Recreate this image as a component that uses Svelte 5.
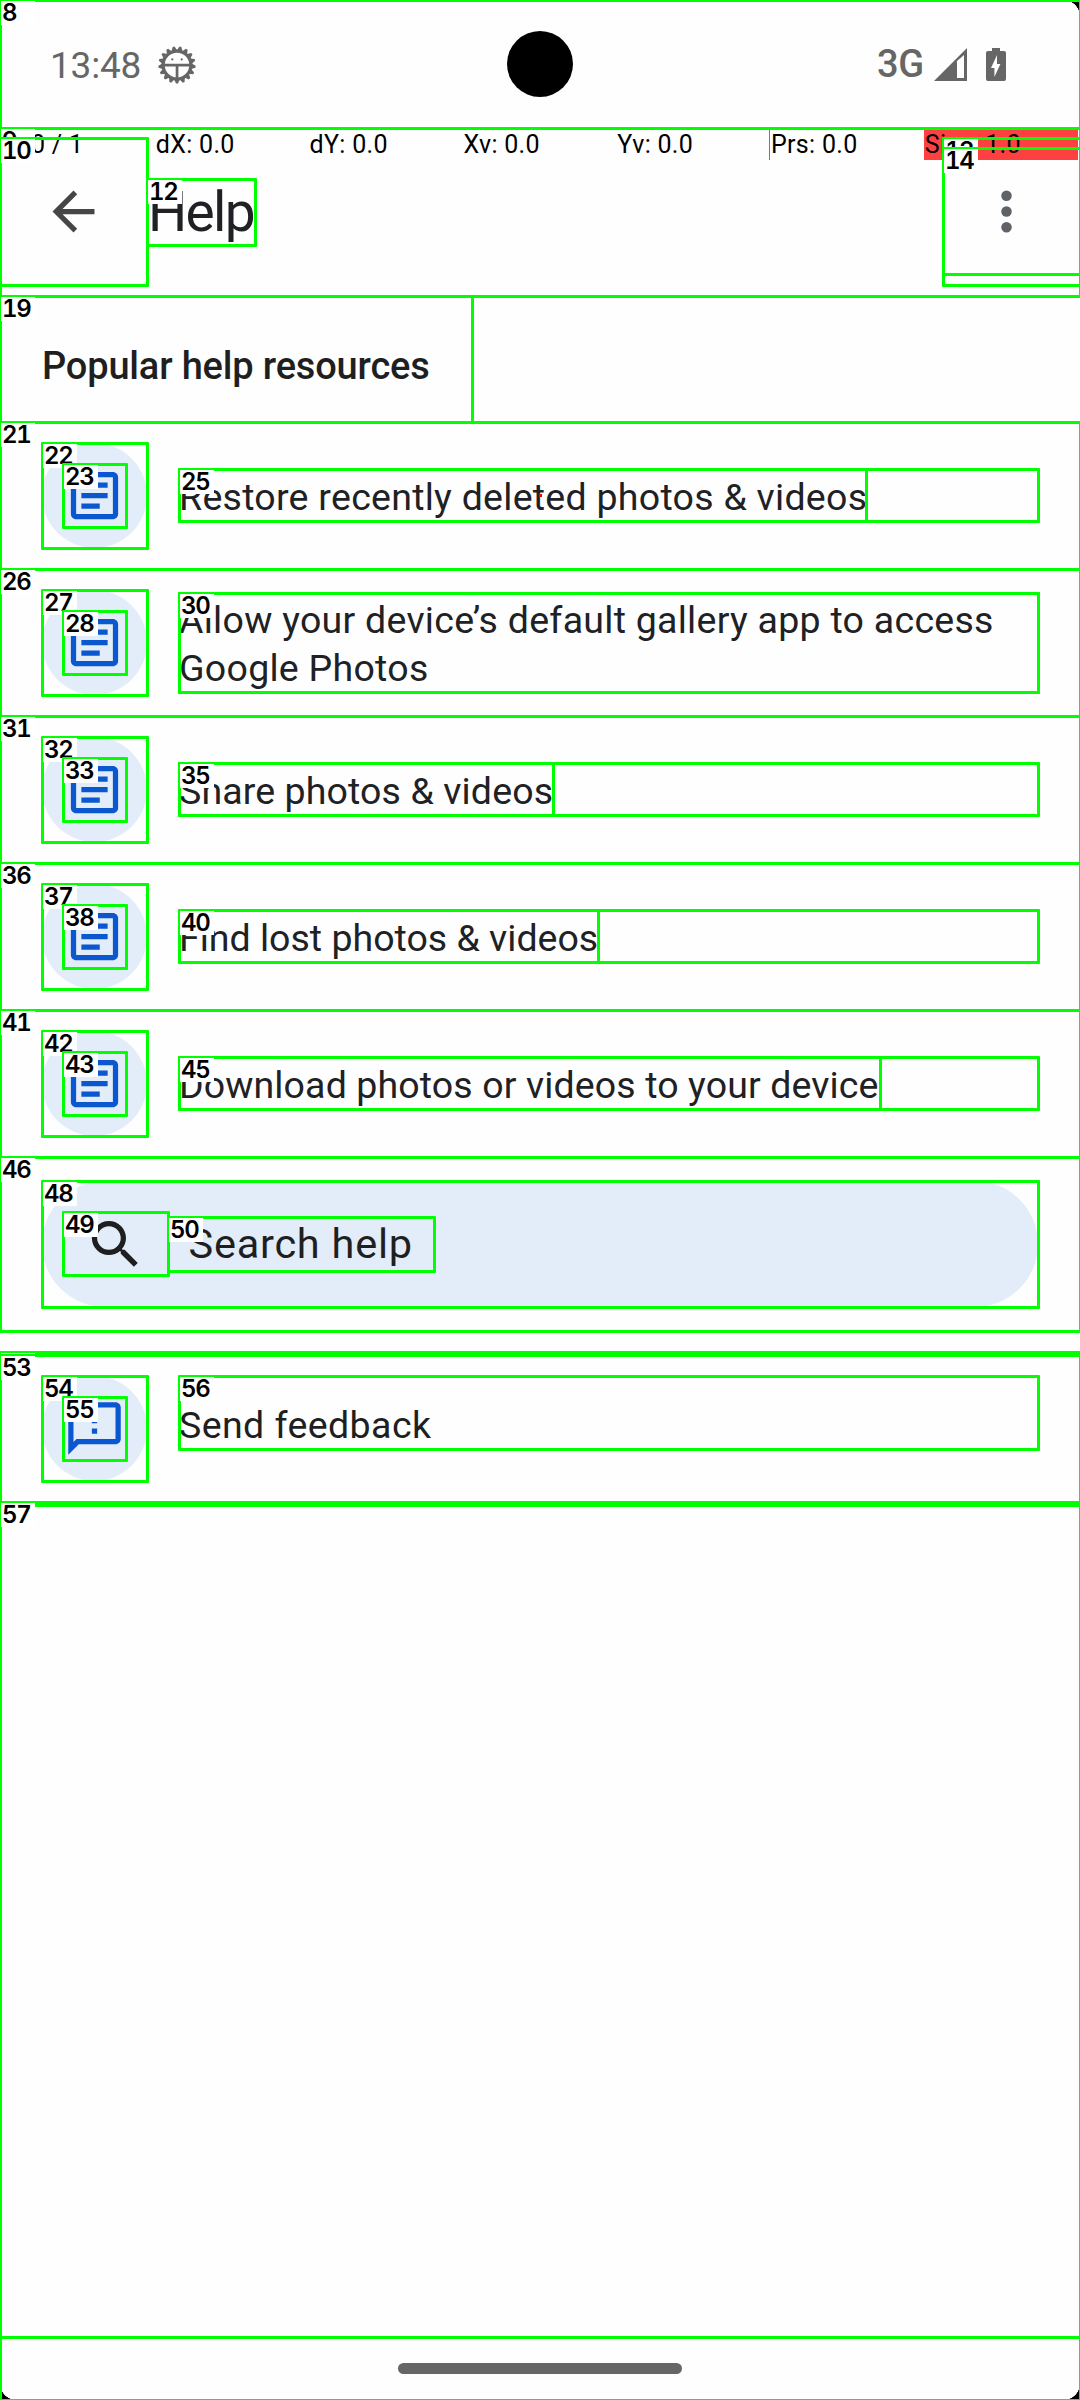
<script>
  const articles = [
    { text: 'Restore recently deleted photos & videos', fit: 'wide' },
    { text: 'Allow your device’s default gallery app to access Google Photos', fit: 'wide' },
    { text: 'Share photos & videos', fit: 'slight' },
    { text: 'Find lost photos & videos', fit: 'plain' },
    { text: 'Download photos or videos to your device', fit: 'slight' }
  ];

  const pointer = ['P: 0 / 1', 'dX: 0.0', 'dY: 0.0', 'Xv: 0.0', 'Yv: 0.0', 'Prs: 0.0', 'Size: 1.0'];

  // Inspector boxes: [label, left, top, right, bottom]
  const rows = [422, 569, 716, 863, 1010].flatMap((y, i) => {
    const n = 21 + i * 5;
    const tall = i === 1;
    const right = [866, 1038, 553, 598, 880][i];
    const t = tall ? 593 : y + 47;
    const b = tall ? 692 : y + 99;
    return [
      [n, 0, y, 1080, y + 147],
      [n + 1, 42, y + 21, 147, y + 126],
      [n + 2, 63, y + 42, 126, y + 105],
      ['', 179, t, 1038, b],
      [n + 4, 179, t, right, b]
    ];
  });
  const boxes = [
    [8, 0, 0, 1080, 128],
    [9, 0, 128, 1080, 296],
    [10, 0, 138, 147, 285],
    [12, 147, 179, 255, 245],
    [13, 943, 138, 1080, 285],
    [14, 943, 148, 1080, 274],
    [19, 0, 296, 472, 422],
    ...rows,
    [46, 0, 1157, 1080, 1331],
    [48, 42, 1181, 1038, 1307],
    [49, 63, 1212, 168, 1275],
    [50, 168, 1217, 434, 1271],
    [' ', 0, 1352, 1080, 1505],
    [53, 0, 1355, 1080, 1505],
    [54, 42, 1376, 147, 1481],
    [55, 63, 1397, 126, 1460],
    [56, 179, 1376, 1038, 1449],
    [57, 0, 1502, 1080, 2337],
    ['', 0, 2337, 1080, 2400]
  ];

  const teeth = Array.from({ length: 17 }, (_, i) => (i * 360) / 17 + 180);
</script>

<div class="screen">
  <header class="status">
    <span class="time">13:48</span>
    <svg class="bug" viewBox="0 0 40 40">
      {#each teeth as a}
        <path d="M16.6 7 L19 1.4 h2 L23.4 7z" transform="rotate({a} 20 20)" />
      {/each}
      <circle cx="20" cy="20" r="13.9" fill="none" stroke="#666" stroke-width="3.2" />
      <path d="M7 18.7h26v2.7H7z M18.7 20h2.7v13h-2.7z" />
      <circle cx="15.3" cy="14.4" r="1.1" /><circle cx="24.7" cy="14.4" r="1.1" />
    </svg>
    <span class="net">3G</span>
    <svg class="signal" viewBox="0 0 33 33"><path fill-rule="evenodd" d="M0 33L33 0V33z M23 13L30 7V30H23z" /></svg>
    <svg class="battery" viewBox="0 0 20 33"><path fill-rule="evenodd" d="M6 0h8v3h4a2 2 0 0 1 2 2V31a2 2 0 0 1-2 2H2a2 2 0 0 1-2-2V5a2 2 0 0 1 2-2h4z M11 7L5 20H8.4V29L14.4 16H11z" /></svg>
    <div class="camera"></div>
  </header>

  <div class="appbar">
    <svg class="back" viewBox="0 0 24 24"><path d="M20 11H7.83l5.59-5.59L12 4l-8 8 8 8 1.41-1.41L7.83 13H20z" /></svg>
    <h1>Help</h1>
    <svg class="more" viewBox="0 0 24 24"><circle cx="12" cy="6" r="2" /><circle cx="12" cy="12" r="2" /><circle cx="12" cy="18" r="2" /></svg>
    <div class="pointer">
      {#each pointer as p, i}<span class:edge={i === 5} class:hot={i === 6}>{p}</span>{/each}
    </div>
  </div>

  <h2>Popular help resources</h2>

  {#each articles as item}
    <div class="row">
      <div class="disc">
        <svg viewBox="0 0 24 24"><path d="M19 5v14H5V5h14m0-2H5c-1.1 0-2 .9-2 2v14c0 1.1.9 2 2 2h14c1.1 0 2-.9 2-2V5c0-1.1-.9-2-2-2zM14 17H7v-2h7v2zm3-4H7v-2h10v2zm0-4H7V7h10v2z" /></svg>
      </div>
      <p class:wide={item.fit === 'wide'} class:slight={item.fit === 'slight'}>{item.text}</p>
    </div>
  {/each}

  <div class="searchwrap">
    <div class="search">
      <svg viewBox="0 0 24 24"><path d="M15.5 14h-.79l-.28-.27C15.41 12.59 16 11.11 16 9.5 16 5.91 13.09 3 9.5 3S3 5.91 3 9.5 5.91 16 9.5 16c1.61 0 3.09-.59 4.23-1.57l.27.28v.79l5 4.99L20.49 19l-4.99-5zm-6 0C7.01 14 5 11.99 5 9.5S7.01 5 9.5 5 14 7.01 14 9.5 11.99 14 9.5 14z" /></svg>
      <span>Search help</span>
    </div>
  </div>

  <div class="row feedback">
    <div class="disc">
      <svg viewBox="0 0 24 24"><path d="M20 2H4c-1.1 0-1.99.9-1.99 2L2 22l4-4h14c1.1 0 2-.9 2-2V4c0-1.1-.9-2-2-2zm0 14H5.17l-.59.59-.58.58V4h16v12zm-9-4h2v2h-2zm0-6h2v4h-2z" /></svg>
    </div>
    <p>Send feedback</p>
  </div>

  <div class="rest"></div>
  <footer><div class="pill"></div></footer>

  <div class="overlay">
    <i class="corner tr"></i><i class="corner bl"></i><i class="corner br"></i>
    <i class="touch"></i>
    {#each boxes as [n, l, t, r, b]}
      <div class="box" style="left:{l - 1}px;top:{t - 1}px;width:{r - l + 3}px;height:{b - t + 3}px">
        {#if n}<b>{n}</b>{/if}
      </div>
    {/each}
  </div>
</div>

<style>
  :global(body) { margin: 0; background: #fff; }
  .screen {
    position: relative;
    width: 1080px;
    height: 2400px;
    overflow: hidden;
    display: flex;
    flex-direction: column;
    background: #fefefe;
    color: #1f1f1f;
    font-family: Roboto, sans-serif;
  }
  svg { display: block; flex: none; }
  h1, h2, p { margin: 0; font-weight: 400; }

  .status {
    position: relative;
    height: 128px;
    flex: none;
    display: flex;
    align-items: center;
    padding: 0 74px 0 50px;
    box-sizing: border-box;
    color: #666;
    fill: #666;
  }
  .time { font-size: 37px; line-height: 44px; padding-top: 4px; width: 107px; letter-spacing: -0.2px; white-space: nowrap; }
  .bug { width: 40px; height: 40px; padding-top: 1px; }
  .net { margin-left: auto; font-size: 38px; font-weight: 500; line-height: 44px; width: 57px; letter-spacing: -0.3px; }
  .signal { width: 33px; height: 33px; margin-right: 19px; }
  .battery { width: 20px; height: 33px; }
  .camera {
    position: absolute;
    left: 507px;
    top: 31px;
    width: 66px;
    height: 66px;
    border-radius: 50%;
    background: #000;
  }

  .appbar {
    position: relative;
    height: 168px;
    flex: none;
    display: flex;
    align-items: center;
    padding: 0 42px 1px;
    box-sizing: border-box;
  }
  .appbar svg { width: 63px; height: 63px; }
  .back { fill: #444746; }
  .more { fill: #5f6368; margin-left: auto; }
  h1 { font-size: 55px; line-height: 66px; margin-left: 43px; letter-spacing: -1.7px; color: #202124; }
  .pointer {
    position: absolute;
    left: 1px;
    top: 2px;
    display: grid;
    grid-template-columns: repeat(7, 153.8px);
    font-size: 25px;
    line-height: 30px;
    letter-spacing: 0.3px;
    color: #000;
  }
  .pointer span { height: 30px; white-space: nowrap; padding-left: 1px; box-sizing: border-box; }
  .pointer .edge { box-shadow: -1px 0 #ff4040; }
  .pointer .hot { background: #ff4040; }

  h2 {
    height: 126px;
    flex: none;
    padding: 14px 42px 0;
    box-sizing: border-box;
    font-size: 38px;
    line-height: 112px;
    font-weight: 500;
    letter-spacing: -0.18px;
  }
  .row {
    height: 147px;
    flex: none;
    display: flex;
    align-items: center;
    padding: 0 42px;
    gap: 32px;
    box-sizing: border-box;
  }
  .disc {
    width: 105px;
    height: 105px;
    flex: none;
    border-radius: 50%;
    background: #e3edfa;
    display: grid;
    place-items: center;
  }
  .disc svg { width: 63px; height: 63px; fill: #0b57d0; }
  .row p { font-size: 37.5px; line-height: 47.5px; padding-top: 4px; color: #202124; width: 859px; }
  .row .wide { letter-spacing: 0.27px; }
  .row .slight { letter-spacing: 0.12px; }
  .searchwrap { height: 174px; flex: none; padding: 24px 42px; box-sizing: border-box; margin-bottom: 24px; }
  .search {
    height: 126px;
    border-radius: 63px;
    background: #e3edfa;
    display: flex;
    align-items: center;
    padding-left: 42px;
    gap: 41.5px;
    font-size: 41.5px;
    line-height: 54px;
    letter-spacing: 0.75px;
  }
  .search svg { width: 63px; height: 63px; fill: #1f1f1f; }
  .feedback p { padding: 0 0 6px; color: #1f1f1f; letter-spacing: 0.42px; }
  .rest { flex: 1; }
  footer { height: 63px; flex: none; display: grid; place-items: center; }
  .pill { width: 284px; height: 11px; border-radius: 6px; background: #666; }

  .overlay { position: absolute; inset: 0; overflow: hidden; }
  .box { position: absolute; box-sizing: border-box; border: 3px solid #0f0; border-radius: 1px; }
  .box b {
    position: absolute;
    left: -1px;
    top: -1px;
    width: 34px;
    height: 24px;
    box-sizing: border-box;
    padding-left: 1px;
    background: #fff;
    color: #000;
    font: 600 24px/24px Inter, sans-serif;
    font-variant-numeric: tabular-nums;
    letter-spacing: -1.2px;
    white-space: nowrap;
  }
  .corner { position: absolute; width: 16px; height: 16px; }
  .tr { right: 0; top: 0; background: radial-gradient(circle at 0 100%, transparent 15.5px, #000 16px); }
  .bl { left: 0; bottom: 0; background: radial-gradient(circle at 100% 0, transparent 15.5px, #000 16px); }
  .br { right: 0; bottom: 0; background: radial-gradient(circle at 0 0, transparent 15.5px, #000 16px); }
  .touch { position: absolute; left: 539px; top: 494px; width: 3px; height: 3px; background: #f00; }
</style>
